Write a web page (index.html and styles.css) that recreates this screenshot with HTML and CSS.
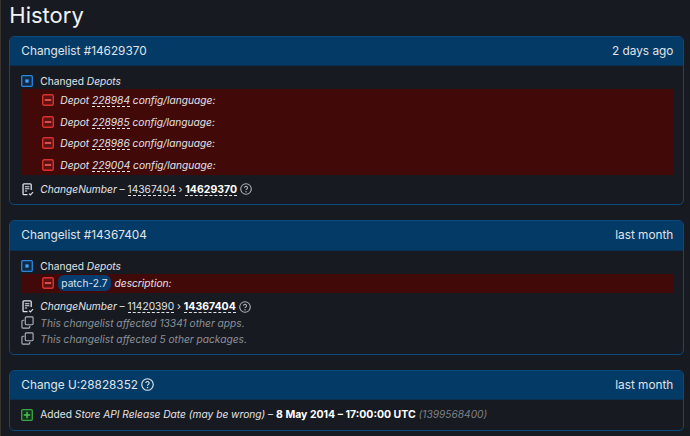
FILE: index.html
```html
<!DOCTYPE html>
<html lang="en">
<head>
<meta charset="utf-8">
<title>History</title>
<link rel="stylesheet" href="styles.css">
</head>
<body>
<svg class="defs" width="0" height="0" aria-hidden="true">
  <symbol id="i-mod" viewBox="0 0 12 12"><rect x=".7" y=".7" width="10.6" height="10.6" rx="1" fill="#0f2a47" stroke="#2b86e0" stroke-width="1.3"/><rect x="4.4" y="4.4" width="3.2" height="3.2" fill="#4aa3f5"/></symbol>
  <symbol id="i-rem" viewBox="0 0 12 12"><rect x=".7" y=".7" width="10.6" height="10.6" rx="1.5" fill="#5c1212" stroke="#dc302c" stroke-width="1.4"/><rect x="2.8" y="5.2" width="6.4" height="1.6" fill="#f4605a"/></symbol>
  <symbol id="i-add" viewBox="0 0 12 12"><rect x=".7" y=".7" width="10.6" height="10.6" rx="1" fill="#12331a" stroke="#3da547" stroke-width="1.3"/><path d="M2.8 6h6.4M6 2.8v6.4" stroke="#4cc257" stroke-width="1.5" fill="none"/></symbol>
  <symbol id="i-log" viewBox="0 0 14 14"><path d="M7 12.6H3.2a1 1 0 0 1-1-1V1.9a1 1 0 0 1 1-1h6.8a1 1 0 0 1 1 1V7.5" fill="none" stroke="#e0e3e8" stroke-width="1.4"/><path d="M4.2 4h4.8M4.2 6.3h4.8M4.2 8.6h2.4" stroke="#e0e3e8" stroke-width="1.1" fill="none"/><path d="M8.6 11.4l1.5 1.4 2.9-3" stroke="#e0e3e8" stroke-width="1.2" fill="none"/></symbol>
  <symbol id="i-copy" viewBox="0 0 14 14"><path d="M3.6 4.6H2a1 1 0 0 0-1 1V12a1 1 0 0 0 1 1h6.4a1 1 0 0 0 1-1v-1.6" fill="none" stroke="#b0b4bb" stroke-width="1.2"/><rect x="4.6" y="1" width="8.4" height="8.4" rx="1" fill="none" stroke="#b0b4bb" stroke-width="1.2"/></symbol>
  <symbol id="i-help" viewBox="0 0 12 12"><circle cx="6" cy="6" r="5.3" fill="none" stroke="currentColor" stroke-width="1.05"/><path d="M4.5 4.7a1.5 1.5 0 1 1 2.3 1.3c-.5.3-.8.6-.8 1.1" fill="none" stroke="currentColor" stroke-width="1.05"/><circle cx="6" cy="8.8" r=".7" fill="currentColor"/></symbol>
</svg>
<main class="page">
  <h1 class="title">History</h1>

  <section class="card">
    <header class="card-head"><span>Changelist #14629370</span><span>2 days ago</span></header>
    <div class="card-body">
      <div class="row"><svg class="ico"><use href="#i-mod"/></svg><span>Changed <i>Depots</i></span></div>
      <div class="removed">
        <div class="sub"><svg class="ico"><use href="#i-rem"/></svg><i>Depot <a class="dash">228984</a> config/language:</i></div>
        <div class="sub"><svg class="ico"><use href="#i-rem"/></svg><i>Depot <a class="dash">228985</a> config/language:</i></div>
        <div class="sub"><svg class="ico"><use href="#i-rem"/></svg><i>Depot <a class="dash">228986</a> config/language:</i></div>
        <div class="sub"><svg class="ico"><use href="#i-rem"/></svg><i>Depot <a class="dash">229004</a> config/language:</i></div>
      </div>
      <div class="row"><svg class="ico big"><use href="#i-log"/></svg><span><i>ChangeNumber</i> – <a class="dash">14367404</a> › <a class="dash"><b>14629370</b></a></span><svg class="help"><use href="#i-help"/></svg></div>
    </div>
  </section>

  <section class="card">
    <header class="card-head"><span>Changelist #14367404</span><span>last month</span></header>
    <div class="card-body">
      <div class="row"><svg class="ico"><use href="#i-mod"/></svg><span>Changed <i>Depots</i></span></div>
      <div class="removed">
        <div class="sub single"><svg class="ico"><use href="#i-rem"/></svg><span class="tag">patch-2.7</span><i>description:</i></div>
      </div>
      <div class="row"><svg class="ico big"><use href="#i-log"/></svg><span><i>ChangeNumber</i> – <a class="dash">11420390</a> › <a class="dash"><b>14367404</b></a></span><svg class="help"><use href="#i-help"/></svg></div>
      <div class="row muted"><svg class="ico big"><use href="#i-copy"/></svg><i>This changelist affected 13341 other apps.</i></div>
      <div class="row muted"><svg class="ico big"><use href="#i-copy"/></svg><i>This changelist affected 5 other packages.</i></div>
    </div>
  </section>

  <section class="card">
    <header class="card-head"><span class="head-help">Change U:28828352<svg class="help large"><use href="#i-help"/></svg></span><span>last month</span></header>
    <div class="card-body">
      <div class="row"><svg class="ico"><use href="#i-add"/></svg><span>Added <i>Store API Release Date (may be wrong)</i> – <b>8 May 2014 – 17:00:00 UTC</b> <i class="dim">(1399568400)</i></span></div>
    </div>
  </section>
</main>
</body>
</html>
```
FILE: styles.css
```css
* { box-sizing: border-box; }
html, body { margin: 0; padding: 0; }
body {
  width: 690px;
  height: 436px;
  overflow: hidden;
  background: #171a21;
  box-shadow: inset 1px 0 0 #3a342f;
  color: #e2e4e8;
  font-family: Inter, "Liberation Sans", sans-serif;
  font-size: 10.2px;
  line-height: 16px;
}
.defs { position: absolute; }
.page { padding: 0 5.7px 0 9.3px; }
.title {
  margin: 0;
  height: 36px;
  font-size: 22px;
  line-height: 31px;
  font-weight: 400;
  color: #f0f2f5;
}
.card {
  margin-bottom: 15px;
  border: 1px solid #0b4a7c;
  border-radius: 5px;
  overflow: hidden;
}
.card-head {
  display: flex;
  justify-content: space-between;
  align-items: center;
  height: 29.3px;
  padding: 0 10px 0 11px;
  background: #033a66;
  border-bottom: 1px solid #0a2f50;
  font-size: 11.8px;
  color: #e0e4ea;
}
.card-body { padding: 7px 10px 7px 11px; }
.row {
  display: flex;
  align-items: center;
  gap: 7px;
  height: 16px;
}
.ico { width: 12px; height: 12px; flex: none; }
.big { width: 13px; height: 13px; margin-right: -1px; }
.removed {
  background: #420909;
  margin-bottom: 6px;
  padding: 0 0 0 21px;
}
.sub {
  display: flex;
  align-items: center;
  gap: 6px;
  height: 21.5px;
}
.sub.single { height: 19px; }
.dash { border-bottom: 1px dashed #e2e4e8; color: inherit; }
.tag {
  margin-left: -2px;
  margin-right: -2px;
  padding: 0 3px;
  height: 16px;
  border-radius: 6px;
  background: #063c6e;
  color: #d9e4f0;
}
b { font-size: 10.5px; font-weight: 700; color: #fff; }
.help { width: 12px; height: 12px; color: #b4b8be; margin-left: -4px; flex: none; }
.muted { color: #8d9198; }
.dim { color: #7d8187; }
.head-help { display: inline-flex; align-items: center; gap: 3px; }
.help.large { width: 13px; height: 13px; color: #e0e4ea; margin-left: 0; }
```
